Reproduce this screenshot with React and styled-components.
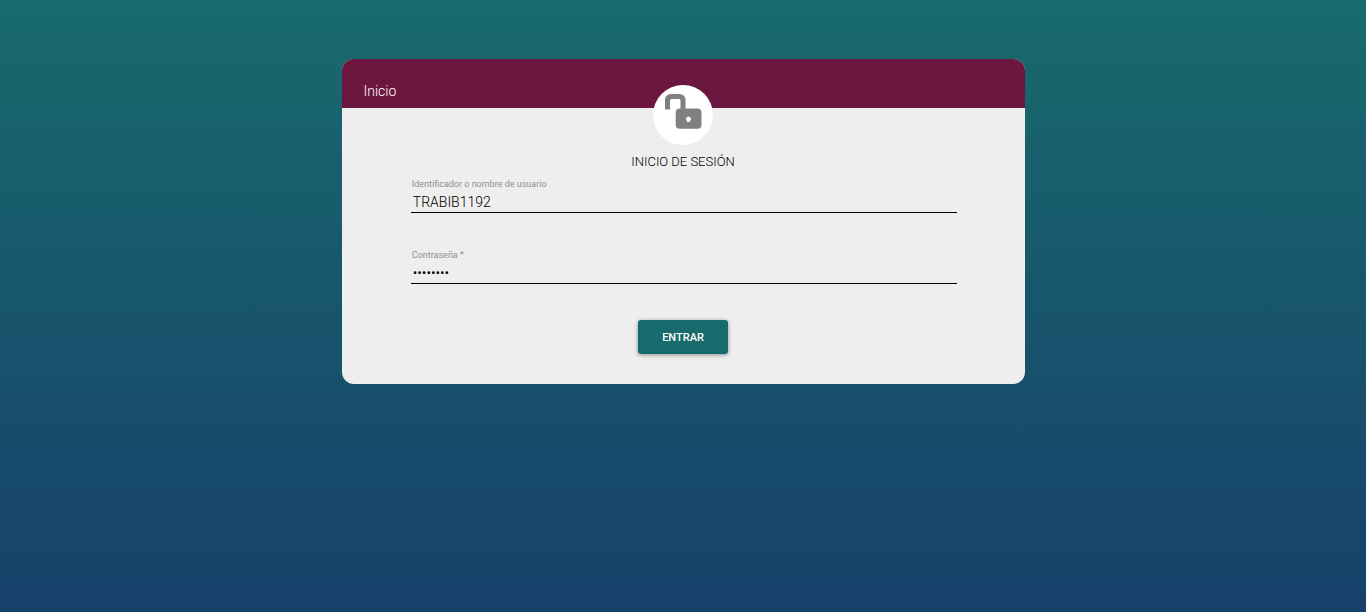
import React from "react";
import styled, { createGlobalStyle } from "styled-components";

const GlobalStyle = createGlobalStyle`
  *, *::before, *::after { box-sizing: border-box; }
  body {
    margin: 0;
    font-family: Roboto, "Liberation Sans", sans-serif;
    font-size: 14px;
    color: #000;
  }
`;

const Page = styled.main`
  display: flex;
  flex-direction: column;
  align-items: center;
  min-height: 100vh;
  padding: 59px 0;
  background: linear-gradient(to bottom, #186b6d, #17406b);
`;

const Card = styled.section`
  width: 50%;
  min-width: 320px;
  overflow: hidden;
  border-radius: 12px;
  background: #eeeeee;
`;

const CardHeader = styled.header`
  height: 49px;
  padding: 24px 22px 0;
  background: #6b173f;
`;

const HeaderTitle = styled.h1`
  margin: 0;
  font-size: 14px;
  line-height: 16px;
  font-weight: 300;
  color: #fff;
`;

const CardBody = styled.div`
  display: flex;
  flex-direction: column;
  align-items: center;
  padding-bottom: 30px;
`;

const Badge = styled.div`
  position: relative;
  width: 60px;
  height: 60px;
  margin-top: -23px;
  border-radius: 50%;
  background: #fff;
`;

const LockIcon = styled.svg`
  display: block;
  width: 60px;
  height: 60px;
`;

const FormTitle = styled.h2`
  margin: 9px 0 0;
  font-size: 13px;
  line-height: 16px;
  font-weight: 300;
  text-transform: uppercase;
`;

const Form = styled.form`
  display: flex;
  flex-direction: column;
  align-items: center;
  width: 100%;
`;

const Field = styled.div`
  display: flex;
  flex-direction: column;
  width: 80%;
  margin: 8px 0 28px 2px;
`;

const Label = styled.label`
  padding-left: 1px;
  font-size: 9px;
  line-height: 12px;
  color: #8f8f8f;
`;

const Input = styled.input`
  width: 100%;
  height: 23px;
  padding: 2px 2px 0;
  border: 0;
  border-bottom: 1px solid #000;
  border-radius: 0;
  outline: none;
  background: transparent;
  font: inherit;
  font-weight: 300;
  line-height: 18px;
  color: #000;
`;

const SubmitButton = styled.button`
  min-width: 90px;
  height: 34px;
  margin-top: 8px;
  padding: 1px 22px 0;
  border: 0;
  border-radius: 3px;
  background: #186b6d;
  box-shadow: 0 1px 4px rgba(0, 0, 0, 0.4);
  font: 500 11px/16px Roboto, "Liberation Sans", sans-serif;
  text-transform: uppercase;
  color: #fff;
  cursor: pointer;
`;

export default function App() {
  return (
    <Page>
      <GlobalStyle />
      <Card>
        <CardHeader>
          <HeaderTitle>Inicio</HeaderTitle>
        </CardHeader>
        <CardBody>
          <Badge>
            <LockIcon viewBox="0 0 60 60" aria-hidden="true">
              <path
                d="M14.5 24.5V15.5Q14.5 11.5 18.5 11.5H26Q30 11.5 30 15.5V26"
                fill="none"
                stroke="#808080"
                strokeWidth="5"
              />
              <path
                fill="#808080"
                fillRule="evenodd"
                d="M27 23.5H44.5Q48.5 23.5 48.5 27.5V39.5Q48.5 43.8 44.5 43.8H27Q22.7 43.8 22.7 39.5V27.8Q22.7 23.5 27 23.5ZM35.5 31.5A2.5 2.5 0 0 0 34 36V37H37V36A2.5 2.5 0 0 0 35.5 31.5Z"
              />
            </LockIcon>
          </Badge>
          <FormTitle>Inicio de sesión</FormTitle>
          <Form onSubmit={(event) => event.preventDefault()}>
            <Field>
              <Label htmlFor="username">Identificador o nombre de usuario</Label>
              <Input id="username" type="text" defaultValue="TRABIB1192" autoComplete="username" />
            </Field>
            <Field>
              <Label htmlFor="password">Contraseña *</Label>
              <Input id="password" type="password" defaultValue="password" autoComplete="current-password" />
            </Field>
            <SubmitButton type="submit">Entrar</SubmitButton>
          </Form>
        </CardBody>
      </Card>
    </Page>
  );
}
